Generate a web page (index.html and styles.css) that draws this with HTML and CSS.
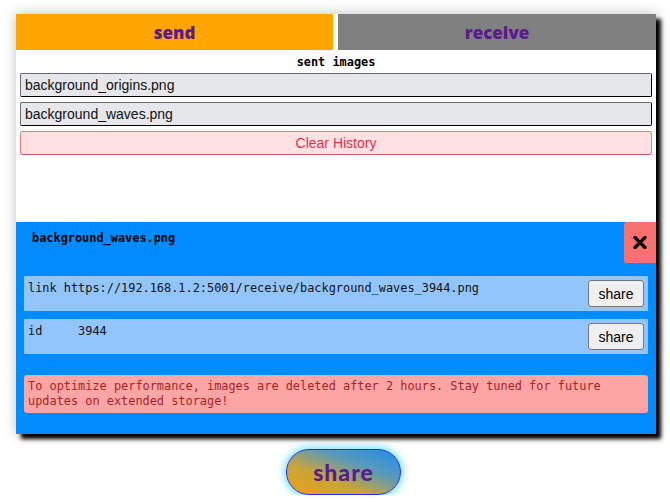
FILE: index.html
```html
<!DOCTYPE html>
<html>
<head>
<meta charset="utf-8">
<link rel="stylesheet" href="styles.css">
</head>
<body>
<div class="card">
  <div class="tabs">
    <div class="tab tab-send">send</div>
    <div class="tab tab-receive">receive</div>
  </div>
  <div class="sent">
    <div class="sent-title">sent images</div>
    <div class="item">background_origins.png</div>
    <div class="item">background_waves.png</div>
    <div class="clear">Clear History</div>
  </div>
  <div class="detail">
    <div class="detail-head">
      <div class="detail-name">background_waves.png</div>
      <div class="close">
        <svg class="close-icon" width="14" height="13" viewBox="0 0 14 13">
          <path d="M2 1.5 L12 11.5 M12 1.5 L2 11.5" stroke="#000" stroke-width="3.2" stroke-linecap="round" fill="none"/>
        </svg>
      </div>
    </div>
    <div class="row">
      <div class="row-text">link https://192.168.1.2:5001/receive/background_waves_3944.png</div>
      <button class="share-small">share</button>
    </div>
    <div class="row">
      <div class="row-text">id     3944</div>
      <button class="share-small">share</button>
    </div>
    <div class="warning">To optimize performance, images are deleted after 2 hours. Stay tuned for future updates on extended storage!</div>
  </div>
</div>
<div class="actions">
  <button class="share-big">share</button>
</div>
</body>
</html>
```
FILE: styles.css
```css
html, body {
  margin: 0;
  padding: 0;
  background: #ffffff;
}
body {
  padding-top: 14px;
  font-family: "Liberation Sans", Arial, sans-serif;
}
.card {
  width: 640px;
  margin-left: 16px;
  background: #ffffff;
  box-shadow: 5px 5px 4px #000000, 0 0 12px rgba(0,0,0,0.25);
}
.tabs {
  display: flex;
  height: 36px;
}
.tab {
  display: flex;
  align-items: center;
  justify-content: center;
  font-family: "Open Sans", sans-serif;
  font-weight: 800;
  font-size: 17px;
  color: #5b1a8e;
}
.tab-send {
  width: 317px;
  background: #ffa500;
}
.tab-receive {
  flex: 1;
  margin-left: 5px;
  background: #808080;
}
.sent {
  height: 172px;
  box-sizing: border-box;
  padding: 4px 4px 0 4px;
}
.sent-title {
  text-align: center;
  font-family: "DejaVu Sans Mono", monospace;
  font-weight: 700;
  font-size: 11.9px;
  line-height: 16px;
  height: 19px;
  color: #000;
}
.item {
  height: 24px;
  box-sizing: border-box;
  background: #e5e7eb;
  border: 1px solid;
  border-color: #6b6b6b #000000 #000000 #6b6b6b;
  border-radius: 2px;
  font-size: 14px;
  line-height: 22px;
  padding-left: 4px;
  color: #111;
  margin-bottom: 5px;
}
.clear {
  height: 24px;
  box-sizing: border-box;
  background: #ffe0e3;
  border: 1px solid #ec7b7b;
  border-bottom-color: #c85c5c;
  border-radius: 3px;
  font-size: 14px;
  line-height: 22px;
  text-align: center;
  color: #e0334a;
}
.detail {
  background: #008cff;
  padding: 0 8px 21px 8px;
}
.detail-head {
  display: flex;
  justify-content: space-between;
  height: 41px;
  margin-right: -8px;
  margin-bottom: 13px;
}
.detail-name {
  font-family: "DejaVu Sans Mono", monospace;
  font-weight: 700;
  font-size: 11.9px;
  padding: 9px 0 0 8px;
  color: #000;
}
.close {
  width: 32px;
  background: #f87171;
  border-radius: 3px 0 0 3px;
  display: flex;
  align-items: center;
  justify-content: center;
}
.close-icon {
  display: block;
}
.row {
  display: flex;
  justify-content: space-between;
  align-items: center;
  background: #93c5fd;
  padding: 4px 4px 4px 4px;
  margin-bottom: 8px;
}
.row-text {
  align-self: flex-start;
  white-space: pre;
  font-family: "DejaVu Sans Mono", monospace;
  font-size: 11.9px;
  line-height: 16px;
  color: #111;
}
.share-small {
  width: 56px;
  height: 27px;
  background: #efefef;
  border: 1px solid #767676;
  border-radius: 3px;
  font-family: "Liberation Sans", Arial, sans-serif;
  font-size: 14px;
  color: #000;
  padding: 0;
}
.warning {
  margin-top: 21px;
  background: #fca5a5;
  border-radius: 3px;
  padding: 4px;
  font-family: "DejaVu Sans Mono", monospace;
  font-size: 11.9px;
  line-height: 15px;
  color: #a82323;
}
.actions {
  padding-top: 15px;
  padding-left: 286px;
}
.share-big {
  width: 115px;
  height: 46px;
  border-radius: 23px;
  border: 1px solid #2626ff;
  background: linear-gradient(to top right, #f0a010, #c8a43a 35%, #5a9ab8 65%, #1e8cf0);
  box-shadow: 0 0 6px 3px #8ee6ff;
  font-family: "Lato", sans-serif;
  font-weight: 900;
  font-size: 23px;
  color: #5b1a8e;
  letter-spacing: 1px;
  padding: 0;
}
```
